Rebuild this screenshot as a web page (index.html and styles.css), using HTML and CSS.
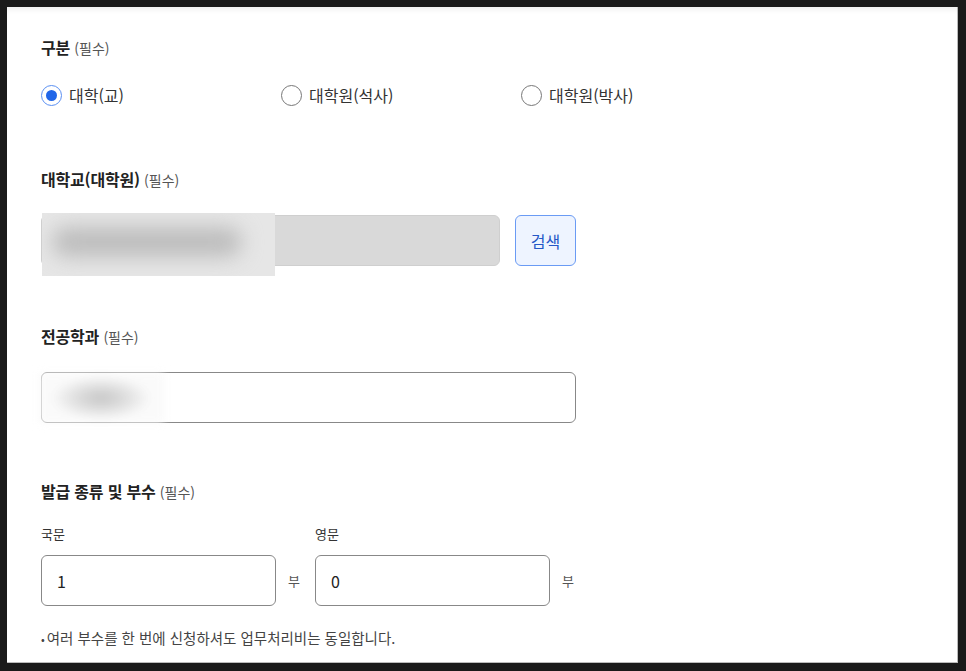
FILE: index.html
```html
<!DOCTYPE html>
<html lang="ko">
<head>
  <meta charset="UTF-8">
  <title>증명서 발급 신청</title>
  <link rel="stylesheet" href="styles.css">
</head>
<body>
  <div class="panel">
    <div class="section first">
      <div class="field-title">구분 <span class="req">(필수)</span></div>
      <div class="radio-row">
        <label class="radio"><span class="dot checked"></span>대학(교)</label>
        <label class="radio"><span class="dot"></span>대학원(석사)</label>
        <label class="radio"><span class="dot"></span>대학원(박사)</label>
      </div>
    </div>

    <div class="section school">
      <div class="field-title">대학교(대학원) <span class="req">(필수)</span></div>
      <div class="search-row">
        <div class="box box-disabled">
          <div class="mask mask-school"><div class="blob"></div></div>
        </div>
        <button type="button" class="btn-search">검색</button>
      </div>
    </div>

    <div class="section major">
      <div class="field-title">전공학과 <span class="req">(필수)</span></div>
      <div class="box box-major">
        <div class="mask mask-major"></div>
      </div>
    </div>

    <div class="section last">
      <div class="field-title tight">발급 종류 및 부수 <span class="req">(필수)</span></div>
      <div class="count-row">
        <div class="count">
          <div class="sub-label">국문</div>
          <div class="count-input">
            <input type="text" value="1">
            <span class="unit">부</span>
          </div>
        </div>
        <div class="count">
          <div class="sub-label">영문</div>
          <div class="count-input">
            <input type="text" value="0">
            <span class="unit">부</span>
          </div>
        </div>
      </div>
      <p class="note"><span class="bullet">•</span>여러 부수를 한 번에 신청하셔도 업무처리비는 동일합니다.</p>
    </div>
  </div>
</body>
</html>
```

FILE: styles.css
```css
html, body {
  margin: 0;
  height: 100%;
}
body {
  background: #1a1a1a;
  padding: 7px 8px 8px 7px;
  box-sizing: border-box;
  font-family: "Noto Sans CJK KR", "Noto Sans", sans-serif;
  color: #222;
}
.panel {
  background: #fff;
  height: 656px;
  box-sizing: border-box;
  padding: 29px 0 0 34px;
  box-shadow: inset 0 6px 6px -4px rgba(0,0,0,0.08), inset -1px 0 0 #bbb, inset 0 -1px 0 #bbb;
  overflow: hidden;
}
.section {
  margin-bottom: 60px;
}
.section.first {
  margin-bottom: 61px;
}
.section.school {
  margin-bottom: 59px;
}
.section.major {
  margin-bottom: 57px;
}
.section.last {
  margin-bottom: 0;
}
.field-title {
  font-size: 16px;
  font-weight: bold;
  line-height: 22px;
  margin-bottom: 24px;
  letter-spacing: -0.2px;
}
.field-title.tight {
  margin-bottom: 22px;
}
.req {
  font-size: 14px;
  font-weight: normal;
  color: #555;
  letter-spacing: 0;
}
.radio-row {
  display: flex;
  margin-top: 2px;
}
.radio {
  display: flex;
  align-items: center;
  width: 240px;
  height: 24px;
  font-size: 16px;
  color: #333;
}
.dot {
  width: 19px;
  height: 19px;
  border: 1.5px solid #777;
  border-radius: 50%;
  margin-right: 7px;
  box-sizing: content-box;
  display: flex;
  align-items: center;
  justify-content: center;
}
.dot.checked {
  border-color: #5a8ff2;
}
.dot.checked::after {
  content: "";
  width: 11px;
  height: 11px;
  border-radius: 50%;
  background: #2166e8;
}
.search-row {
  display: flex;
  gap: 15px;
}
.box {
  position: relative;
  height: 51px;
  border: 1px solid #888;
  border-radius: 6px;
  box-sizing: border-box;
}
.box-disabled {
  width: 459px;
  background: #d9d9d9;
  border-color: #cfcfcf;
}
.box-major {
  width: 535px;
  background: #fff;
}
.mask {
  position: absolute;
}
.mask-school {
  left: 0;
  top: -3px;
  width: 233px;
  height: 63px;
  background: #e6e6e6;
  overflow: hidden;
}
.blob {
  position: absolute;
  left: 10px;
  top: 14px;
  width: 190px;
  height: 30px;
  border-radius: 15px;
  background: #bdbdbd;
  filter: blur(10px);
}
.mask-major {
  left: -3px;
  top: 0;
  width: 125px;
  height: 50px;
  background: radial-gradient(ellipse 50px 22px at 62px 25px, #c6c6c6, #dedede 50%, rgba(250,250,250,0.95) 100%);
  filter: blur(4px);
}
.btn-search {
  width: 61px;
  height: 51px;
  border: 1px solid #6a9bf4;
  border-radius: 6px;
  background: #eef4ff;
  color: #2557c7;
  font-family: inherit;
  font-size: 16px;
  padding: 0;
}
.count-row {
  display: flex;
  gap: 15px;
}
.sub-label {
  font-size: 13px;
  line-height: 18px;
  color: #333;
  margin-bottom: 12px;
}
.count-input {
  display: flex;
  align-items: center;
}
.count-input input {
  width: 235px;
  height: 51px;
  box-sizing: border-box;
  border: 1px solid #888;
  border-radius: 6px;
  padding: 0 0 0 15px;
  font-family: inherit;
  font-size: 16px;
  color: #222;
  outline: none;
}
.unit {
  width: 24px;
  text-align: right;
  font-size: 13px;
  color: #555;
}
.note {
  margin: 22px 0 0 0;
  font-size: 14.5px;
  line-height: 20px;
  color: #444;
}
.bullet {
  font-size: 11px;
  margin-right: 2px;
}
```
